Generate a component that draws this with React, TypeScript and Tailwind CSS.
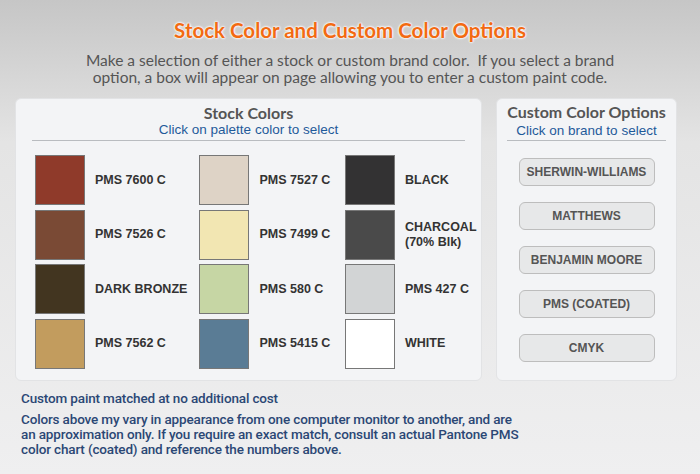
const swatches = [
  [
    { color: "#8f3a2a", label: "PMS 7600 C" },
    { color: "#7a4a35", label: "PMS 7526 C" },
    { color: "#423520", label: "DARK BRONZE" },
    { color: "#c29c5e", label: "PMS 7562 C" },
  ],
  [
    { color: "#ded3c6", label: "PMS 7527 C" },
    { color: "#f2e6b2", label: "PMS 7499 C" },
    { color: "#c6d6a4", label: "PMS 580 C" },
    { color: "#5a7c95", label: "PMS 5415 C" },
  ],
  [
    { color: "#333233", label: "BLACK" },
    { color: "#4a4a4a", label: "CHARCOAL\n(70% Blk)" },
    { color: "#d2d4d5", label: "PMS 427 C" },
    { color: "#ffffff", label: "WHITE" },
  ],
];

const brands = ["SHERWIN-WILLIAMS", "MATTHEWS", "BENJAMIN MOORE", "PMS (COATED)", "CMYK"];

export default function App() {
  return (
    <div className="w-[700px] h-[474px] overflow-hidden bg-gradient-to-b from-[#c6c6c6] via-[#e4e4e4] via-30% to-[#efeff0] font-['Lato',sans-serif]">
      <h1
        className="pt-[17px] text-center text-[20.5px] leading-[26px] font-bold text-[#f26a12]"
        style={{ textShadow: "0 0 2px #fff, 0 0 2px #fff, 0 0 3px #fff" }}
      >
        Stock Color and Custom Color Options
      </h1>
      <p className="mt-[9px] mx-auto w-[540px] text-center text-[15.5px] leading-[17px] text-[#555]">
        Make a selection of either a stock or custom brand color.&nbsp; If you select a brand option, a box will appear on page allowing you to enter a custom paint code.
      </p>

      <div className="mt-[12px] flex gap-[14px] pl-[15px]">
        <div className="w-[467px] h-[283px] rounded-[6px] bg-[#f3f4f6] border border-[#e2e3e5] px-[16px]">
          <div className="text-center pt-[5px] border-b border-[#b9bcc0] pb-[2px]">
            <div className="text-[16px] leading-[18px] font-bold text-[#555]">Stock Colors</div>
            <div className="text-[13.5px] leading-[16px] text-[#1f5a9a] font-['Liberation_Sans',sans-serif]">
              Click on palette color to select
            </div>
          </div>
          <div className="flex pt-[12px] pl-[3px]">
            {swatches.map((col, ci) => (
              <div key={ci} className={ci === 0 ? "w-[165px]" : ci === 1 ? "w-[146px]" : "w-[120px]"}>
                {col.map((s) => (
                  <div key={s.label} className="flex items-center h-[54.5px]">
                    <div
                      className="w-[50px] h-[50px] border border-[#777] shrink-0"
                      style={{ backgroundColor: s.color }}
                    />
                    <div className="ml-[10px] whitespace-pre text-[12.5px] leading-[15px] font-bold text-[#333] font-['Liberation_Sans',sans-serif]">
                      {s.label}
                    </div>
                  </div>
                ))}
              </div>
            ))}
          </div>
        </div>

        <div className="w-[181px] h-[283px] rounded-[6px] bg-[#f3f4f6] border border-[#e2e3e5] px-[10px]">
          <div className="text-center pt-[4px] border-b border-[#b9bcc0] pb-[1px]">
            <div className="text-[16px] leading-[18px] font-bold text-[#555] whitespace-nowrap">Custom Color Options</div>
            <div className="mt-[2px] text-[13.5px] leading-[16px] text-[#1f5a9a] font-['Liberation_Sans',sans-serif]">
              Click on brand to select
            </div>
          </div>
          <div className="flex flex-col items-center gap-[16px] pt-[17px]">
            {brands.map((b) => (
              <button
                key={b}
                className="w-[136px] h-[28px] rounded-[6px] border border-[#bdbdbd] bg-[#e7e8e9] text-[12px] font-bold text-[#555] font-['Liberation_Sans',sans-serif]"
              >
                {b}
              </button>
            ))}
          </div>
        </div>
      </div>

      <div className="pl-[21px] pt-[9px] font-['Roboto',sans-serif] font-medium text-[#2b4775] text-[13.5px] tracking-[-0.15px]">
        <p className="leading-[16px]">Custom paint matched at no additional cost</p>
        <p className="mt-[6px] leading-[15px] w-[506px]">
          Colors above my vary in appearance from one computer monitor to another, and are an approximation only. If you require an exact match, consult an actual Pantone PMS color chart (coated) and reference the numbers above.
        </p>
      </div>
    </div>
  );
}
